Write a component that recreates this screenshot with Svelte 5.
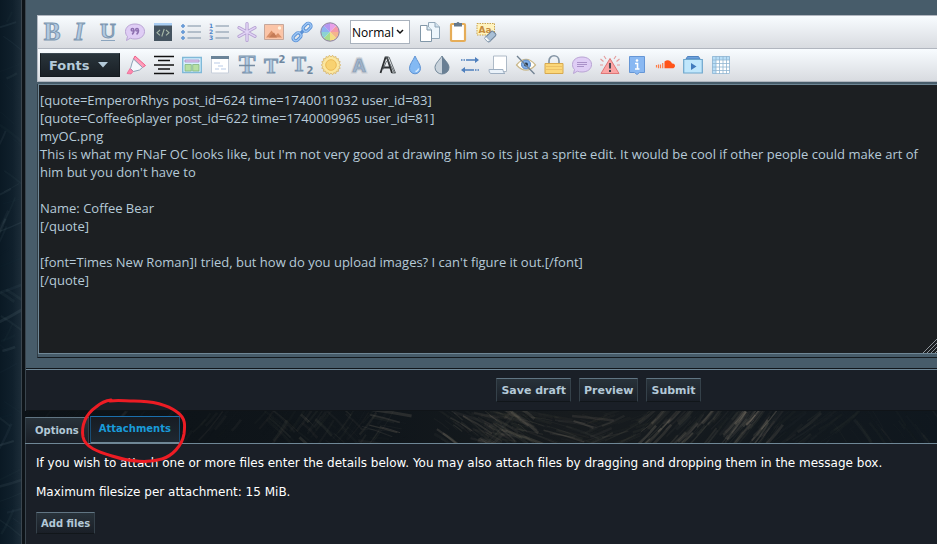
<script lang="ts">
	type Icon = { label: string; art: string };

	const letter = (char: string, extra = '', x = 10, size = 25) =>
		`<text x="${x}" y="18" text-anchor="middle" font-family="Liberation Serif, serif" font-weight="bold" font-size="${size}" fill="#b3cae1" stroke="#7c96b0" stroke-width="1" ${extra}>${char}</text>`;

	const small = (char: string, x: number, y: number, size: number, fill: string) =>
		`<text x="${x}" y="${y}" text-anchor="middle" font-family="DejaVu Sans, sans-serif" font-weight="bold" font-size="${size}" fill="${fill}">${char}</text>`;

	const wheel = ['#e8a0e8', '#f59aa8', '#f5b48c', '#f5dc82', '#a8dc8c', '#8cd2d2', '#8cb4f0', '#b496f0']
		.map((fill, i) => `<path d="M10 10V1A9 9 0 0 1 16.4 3.6Z" fill="${fill}" transform="rotate(${i * 45} 10 10)"/>`)
		.join('');

	const sunPoints = Array.from({ length: 36 }, (_, i) => {
		const r = i % 2 ? 8.2 : 9.8;
		const a = (i * Math.PI) / 18;
		return `${(10 + r * Math.cos(a)).toFixed(2)},${(10 + r * Math.sin(a)).toFixed(2)}`;
	}).join(' ');

	const basic: Icon[] = [
		{ label: 'Bold', art: letter('B') },
		{ label: 'Italic', art: letter('I', 'font-style="italic"', 9) },
		{ label: 'Underline', art: letter('U', 'dy="-2"', 10, 22) + '<path d="M3 18.500H17" stroke="#8ca5be"/>' },
		{
			label: 'Quote',
			art: '<path d="M10 2c5.500 0 9.500 3 9.500 7.500S15.500 17 10 17c-1.800 0-3.300-.2-4.700-.8L1.500 18.500l1-4C1.200 13.200.500 11.500.500 9.500.500 5 4.500 2 10 2Z" fill="#dfcdf5" stroke="#b9a4d4"/><g fill="none" stroke="#8d6fb0" stroke-width="1.500"><circle cx="7.500" cy="7.800" r="1.300"/><path d="M9 8c0 2-.5 3.500-2 4.200"/><circle cx="12" cy="7.800" r="1.300"/><path d="M13.500 8c0 2-.5 3.500-2 4.200"/></g>'
		},
		{
			label: 'Code',
			art: '<path d="M1 1H19V19H1Z" fill="#455460"/><path d="M1 1H19V3.500H1Z" fill="#a9cdf2"/><path d="M7 8 4 10.700 7 13.400M13 8l3 2.700-3 2.700M11.200 7 8.800 14.500" fill="none" stroke="#a7b8a8" stroke-width="1.100"/>'
		},
		{
			label: 'List',
			art: '<path d="M6.500 4H20M6.500 10H20M6.500 16H20" stroke="#7c8fa3" stroke-width="1.200"/><g fill="#8cbcf0" stroke="#4d85ca"><circle cx="2" cy="4" r="1.300"/><circle cx="2" cy="10" r="1.300"/><circle cx="2" cy="16" r="1.300"/></g>'
		},
		{
			label: 'Ordered list',
			art:
				'<path d="M6.500 4H20M6.500 10H20M6.500 16H20" stroke="#7c8fa3" stroke-width="1.200"/>' +
				small('1', 2, 6, 6, '#4d85ca') +
				small('2', 2, 12, 6, '#4d85ca') +
				small('3', 2, 18, 6, '#4d85ca')
		},
		{
			label: 'List item',
			art: '<path d="M10 1.500V18.500M2 5.700 18 14.300M18 5.700 2 14.300" stroke="#b5a0d2" stroke-width="3.200" stroke-linecap="round"/><path d="M10 1.500V18.500M2 5.700 18 14.300M18 5.700 2 14.300" stroke="#e2d5f6" stroke-width="1.500" stroke-linecap="round"/>'
		},
		{
			label: 'Image',
			art: '<path d="M.5 2.500H19.500V17.500H.5Z" fill="#fbc5a8" stroke="#c5a79b"/><circle cx="15.500" cy="6" r="1.700" fill="#fff2df"/><path d="m2 15.500 5.500-7 4 5 2.500-2.500 4 4.500Z" fill="#d98f68"/><path d="m8 12 2-1.500 3 5H5Z" fill="#c47b57"/>'
		},
		{
			label: 'Link',
			art: '<g fill="none" stroke="#5b92d6" stroke-width="3.200"><rect x="10.500" y="2.500" width="9" height="5.500" rx="2.700" transform="rotate(-45 15 5.200)"/><rect x=".5" y="12" width="9" height="5.500" rx="2.700" transform="rotate(-45 5 14.700)"/><path d="m7 13 6-6"/></g><g fill="none" stroke="#9dc6f5" stroke-width="1.300"><rect x="10.500" y="2.500" width="9" height="5.500" rx="2.700" transform="rotate(-45 15 5.200)"/><rect x=".5" y="12" width="9" height="5.500" rx="2.700" transform="rotate(-45 5 14.700)"/></g>'
		},
		{ label: 'Font colour', art: wheel + '<circle cx="10" cy="10" r="9.200" fill="none" stroke="#8a7c9c"/>' }
	];

	const clipboard: Icon[] = [
		{
			label: 'Copy',
			art: '<path d="M8.500.5H15L19.500 5V16.500H8.500Z" fill="#edf6fc" stroke="#91a7b8"/><path d="M15 .5V5H19.500" fill="#cfe1ee" stroke="#91a7b8"/><path d="M.5 3.500H7L11.500 8V19.500H.5Z" fill="#fff" stroke="#8197a8"/><path d="M7 3.500V8H11.500" fill="#d8e8f2" stroke="#8197a8"/>'
		},
		{
			label: 'Paste',
			art: '<rect x="3" y="2" width="14" height="17" rx="1" fill="#fff" stroke="#e6ad58" stroke-width="2.200"/><path d="M6 1h2.500c.5-1.300 2.500-1.300 3 0H14v3.500H6Z" fill="#64788c"/>'
		},
		{
			label: 'Remove formatting',
			art:
				'<path d="M1 1.500H18.500V13H1Z" fill="#fff3be" stroke="#c9a34e" stroke-dasharray="1.500 1"/>' +
				'<text x="9" y="11" text-anchor="middle" font-family="DejaVu Sans, sans-serif" font-size="9" font-weight="bold" fill="#c58c3e">Aa</text>' +
				'<rect x="9" y="11.500" width="11" height="6" rx="1.500" fill="#a8bfd6" stroke="#6d8299" transform="rotate(-45 14.500 14.500)"/><path d="m10 14.500 4.500 4.500-3 .5-3-3Z" fill="#f4f8fb" stroke="#8ca0b4" stroke-width=".7"/>'
		}
	];

	const custom: Icon[] = [
		{
			label: 'Highlight',
			art: '<path d="m9 1 10.500 9.500-3 2L7.500 4Z" fill="#ff9dba" stroke="#ee5d86"/><path d="m7.500 4 9 8.500-3 2.500-6 1.500-3-3L6 8Z" fill="#f4f8fc" stroke="#8da3b8"/><path d="m4 13.500 3 3-2 2.500-4-.5Z" fill="#ff86ac" stroke="#e86490" stroke-width=".7"/>'
		},
		{ label: 'Center', art: '<path d="M0 1.500H20M4 5.500H16M0 10H20M4 14H16M0 18.500H20" stroke="#111" stroke-width="1.600"/>' },
		{
			label: 'Table',
			art: '<path d="M.7 2.500H19.300V17.500H.7Z" fill="#d6f1ff" stroke="#80b9d8" stroke-width="1.400"/><path d="M3 5H17V7H3Z" fill="#e4cdf4" stroke="#aa8dc3" stroke-width=".8"/><path d="M3 9.500H9.300V16H3ZM10.700 9.500H17V16H10.700Z" fill="#b7dfa3" stroke="#83b57e" stroke-width=".8"/>'
		},
		{
			label: 'Window',
			art: '<path d="M1.500 2H18.500V18H1.500Z" fill="#fff" stroke="#c7cfdb"/><path d="M1 1H19V4H1Z" fill="#6a8398"/><path d="M4 8H10M8 11H13M5 14H9M11 14H16" stroke="#b9cbe8" stroke-width="1.200"/>'
		},
		{ label: 'Strikethrough', art: letter('T') + '<path d="M2 10.500H18" stroke="#768ca3" stroke-width="1.500"/>' },
		{ label: 'Superscript', art: letter('T', '', 6, 21) + small('2', 17, 8, 10, '#6f87a0') },
		{ label: 'Subscript', art: letter('T', 'dy="-2"', 6, 21) + small('2', 17, 19, 10, '#6f87a0') },
		{
			label: 'Glow',
			art: `<polygon points="${sunPoints}" fill="#fbe7a0" stroke="#d5b061" stroke-width=".8"/><circle cx="10" cy="10" r="5.300" fill="#f8d271" stroke="#edbb57"/>`
		},
		{
			label: 'Shadow',
			art: '<text x="10" y="17" text-anchor="middle" font-family="Liberation Sans, sans-serif" font-size="19" font-weight="bold" fill="#a9b8c8" stroke="#c9ced5" stroke-width="3" paint-order="stroke">A</text><text x="10" y="17" text-anchor="middle" font-family="Liberation Sans, sans-serif" font-size="19" font-weight="bold" fill="#9fb4cc" stroke="#8297ad" stroke-width=".6">A</text>'
		},
		{
			label: 'Drop shadow',
			art: '<path d="M3.500 18 8.500 2.500H10L15 18M5.500 12.500H13.500" fill="none" stroke="#2d3032" stroke-width="1.800"/><path d="M10 3 17.500 18M8.500 2.500 12 2l6.500 16H15M6 14.500 9.500 6" fill="none" stroke="#555b5f" stroke-width=".9"/>'
		},
		{
			label: 'Blur',
			art: '<path d="M10 1C12 6 15.500 9 15.500 13.300a5.500 5.500 0 0 1-11 0C4.500 9 8 6 10 1Z" fill="#83b9f3" stroke="#5f93d3"/><path d="M13.500 13.500a3.500 3.500 0 0 1-3 3" fill="none" stroke="#dceeff" stroke-width="1.300"/>'
		},
		{
			label: 'Contrast',
			art: '<path d="M10 1c2.500 4 7 7.500 7 11.500a7 6.500 0 0 1-14 0C3 8.500 7.500 5 10 1Z" fill="#c9d3dc" stroke="#74899a"/><path d="M10 1c2.500 4 7 7.500 7 11.500a7 6.500 0 0 1-7 6.500Z" fill="#697f94"/>'
		},
		{
			label: 'Marquee',
			art: '<g stroke="#4e7fbd" stroke-width="1.600"><path d="M6 5H17M4 15H14"/><path d="M1 5H5M15 15H19" stroke-dasharray="1.500 1"/></g><path d="m15 2 4 3-4 3ZM5 12l-4 3 4 3Z" fill="#4e7fbd"/>'
		},
		{
			label: 'Scroll',
			art: '<path d="M5.500 1H18.500V16.500H5.500Z" fill="#fff" stroke="#aebac7"/><path d="M1 14.500H15c0 2 1 3.500 2 4H3c-1.500 0-2-2-2-4Z" fill="#eaf2fa" stroke="#9eafc2"/>'
		},
		{
			label: 'Hidden',
			art: '<path d="M.5 10Q10-1.500 19.500 10 10 20.500.500 10Z" fill="#fffef8" stroke="#c9b78a" stroke-width="1.200"/><circle cx="10" cy="9.500" r="4.500" fill="#7eaeea" stroke="#5d86bd"/><circle cx="10" cy="9.500" r="2" fill="#25364a"/><path d="M1 1 18.500 19" stroke="#718292" stroke-width="1.300"/>'
		},
		{
			label: 'Private',
			art: '<path d="M5 9V6C5-1 15-1 15 6V9" fill="none" stroke="#8495a5" stroke-width="1.700"/><path d="M1 8.500H19V18.500H1Z" fill="#fbd779" stroke="#d7a94f"/><path d="M2 11.500H18M2 14.500H18" stroke="#ecc067"/>'
		},
		{
			label: 'Comment',
			art: '<path d="M10 2c5.500 0 9.500 3 9.500 7.500S15.500 17 10 17c-1.800 0-3.300-.2-4.700-.8L1.500 18.500l1-4C1.200 13.200.500 11.500.500 9.500.500 5 4.500 2 10 2Z" fill="#dfcdf5" stroke="#b9a4d4"/><path d="M5 7.500H15M5 9.500H15M5 11.500H12" stroke="#aa91c8"/>'
		},
		{
			label: 'Warning',
			art: '<path d="m10 3.500 9 15H1Z" fill="#fba5a5" stroke="#de7777"/><path d="M10 8V13.500M10 15V17" stroke="#42464f" stroke-width="1.900"/><path d="m6 4-2-3M3.500 6.500.500 4M3 10H0M14 4l2-3M16.500 6.500 19.500 4M17 10H20" stroke="#e59a9a" stroke-width="1.100"/>'
		},
		{
			label: 'Information',
			art: '<path d="M2.500 1.500H17.500V17.500H12.500L10 19.500 7.500 17.500H2.500Z" fill="#89b8f2" stroke="#6596d6"/><circle cx="10" cy="5.500" r="1.300" fill="#fff"/><path d="M8 8.500H10.500V14M8 14H12.500" fill="none" stroke="#fff" stroke-width="1.600"/>'
		},
		{
			label: 'SoundCloud',
			art: '<path d="M9.500 6.500c3-2.500 6.500-1 7.500 2 2-.3 3 1 3 2.200 0 1.500-1 2.600-2.800 2.600H9.500Z" fill="#ff5419"/><path d="M1.500 10V12.500M3.500 9.500V13.300M5.500 9.500V13.300M7.700 8V13.300" stroke="#ff7b46" stroke-width="1.200"/>'
		},
		{
			label: 'Video',
			art: '<path d="M3 4 4.500 1.500h11L17 4Z" fill="#6ca1dd" stroke="#4f83bf"/><path d="M.7 4.500H19.300V18H.7Z" fill="#c0e7fc" stroke="#6da6cc" stroke-width="1.200"/><path d="m8 8 5.500 3.500L8 15Z" fill="#417bbd"/>'
		},
		{
			label: 'Grid',
			art: '<path d="M1 1H19V19H1Z" fill="#fff"/><path d="M1 1H19V5H5V19H1Z" fill="#b8def7"/><path d="M1.500 1.500H18.500V18.500H1.500ZM5 1V19M8.500 1V19M12 1V19M15.500 1V19M1 5H19M1 8.500H19M1 12H19M1 15.500H19" fill="none" stroke="#91b5d1" stroke-width=".8"/>'
		}
	];

	// Scratches of the page background, fixed seed so they stay put between renders.
	// lean is the slope of the strokes, glow their strongest opacity
	function scratches(count: number, x0: number, w: number, h: number, lean: number, glow: number) {
		let s = Math.round(count * 7919 + x0 * 31 + w + 11);
		const rnd = () => (s = (s * 16807) % 2147483647) / 2147483647;
		rnd();
		return Array.from({ length: count }, () => {
			const x = x0 + rnd() * w;
			const y = rnd() * h;
			const dx = (14 + rnd() * 40) / (1 + Math.abs(lean));
			const dy = dx * (lean + (rnd() - 0.5) * 0.3);
			return {
				d: `M${(x - dx / 2).toFixed(1)} ${(y - dy / 2).toFixed(1)}q${(dx * 0.5).toFixed(1)} ${(dy * 0.4).toFixed(1)} ${dx.toFixed(1)} ${dy.toFixed(1)}`,
				o: glow * rnd() * rnd(),
				w: 0.6 + rnd() * 2.4
			};
		});
	}

	const sideMarks = [
		...scratches(30, 0, 20, 544, -0.4, 0.16),
		...scratches(24, 0, 20, 544, 0.8, 0.14),
		...scratches(10, 0, 10, 544, -2, 0.2)
	];

	const bandMarks = [
		...scratches(60, 0, 250, 34, -1.2, 0.1),
		...scratches(50, 240, 90, 34, 0.9, 0.18),
		...scratches(40, 240, 120, 34, -1.4, 0.16),
		...scratches(12, 352, 16, 34, 0.2, 0.3),
		...scratches(90, 415, 90, 34, 0.7, 0.28),
		...scratches(80, 450, 130, 34, 0.25, 0.26),
		...scratches(30, 455, 40, 34, -1.1, 0.2),
		...scratches(50, 560, 60, 34, -0.4, 0.15),
		...scratches(60, 615, 50, 34, -1, 0.32),
		...scratches(60, 665, 50, 34, -1.2, 0.22),
		...scratches(60, 710, 40, 34, -1.3, 0.36),
		...scratches(50, 750, 80, 34, -0.8, 0.12),
		...scratches(40, 810, 100, 34, 1.4, 0.12)
	];

	let size = $state('Normal');
	let message = $state(`[quote=EmperorRhys post_id=624 time=1740011032 user_id=83]
[quote=Coffee6player post_id=622 time=1740009965 user_id=81]
myOC.png
This is what my FNaF OC looks like, but I'm not very good at drawing him so its just a sprite edit. It would be cool if other people could make art of him but you don't have to

Name: Coffee Bear
[/quote]

[font=Times New Roman]I tried, but how do you upload images? I can't figure it out.[/font]
[/quote]`);
</script>

{#snippet tools(icons: Icon[])}
	{#each icons as icon (icon.label)}
		<button class="tool" type="button" aria-label={icon.label}>
			<svg viewBox="0 0 20 20" aria-hidden="true">{@html icon.art}</svg>
		</button>
	{/each}
{/snippet}

<div class="page">
	<div class="side">
		<svg viewBox="0 0 26 544" preserveAspectRatio="xMinYMin slice" aria-hidden="true">
			{#each sideMarks as mark}
				<path d={mark.d} stroke-opacity={mark.o} stroke-width={mark.w} />
			{/each}
		</svg>
	</div>

	<main>
		<section class="editor">
			<div class="toolbar">
				<div class="row">
					<div class="group basic">{@render tools(basic)}</div>
					<div class="size">
						<select aria-label="Font size" bind:value={size}>
							<option>Tiny</option>
							<option>Normal</option>
							<option>Large</option>
						</select>
						<svg viewBox="0 0 8 6" aria-hidden="true"><path d="m1 1 3 3 3-3" /></svg>
					</div>
					<div class="group">{@render tools(clipboard)}</div>
				</div>
				<div class="row">
					<button class="fonts" type="button">
						Fonts
						<svg viewBox="0 0 10 6" aria-hidden="true"><path d="M0 0H10L5 5.500Z" /></svg>
					</button>
					<div class="group custom">{@render tools(custom)}</div>
				</div>
			</div>
			<div class="message">
				<textarea aria-label="Message" spellcheck="false" bind:value={message}></textarea>
				<svg class="grip" viewBox="0 0 15 15" aria-hidden="true">
					<path d="M1 15 15 1M5 15 15 5M9 15l6-6M13 15l2-2" />
				</svg>
			</div>
		</section>

		<div class="actions">
			<button class="btn" type="button">Save draft</button>
			<button class="btn" type="button">Preview</button>
			<button class="btn" type="button">Submit</button>
		</div>

		<nav class="tabs">
			<svg class="texture" viewBox="0 0 912 34" preserveAspectRatio="xMinYMin slice" aria-hidden="true">
				{#each bandMarks as mark}
					<path d={mark.d} stroke-opacity={mark.o} stroke-width={mark.w} />
				{/each}
			</svg>
			<button class="tab" type="button">Options</button>
			<button class="tab active" type="button">Attachments</button>
			<svg class="mark" viewBox="0 0 110 70" aria-hidden="true">
				<path
					d="M31 5C39 4 46 5 55 5c20 0 35 5 43 11 9 6 8 14 7 22-2 12-12 22-22 25-13 4-32 3-50-3C19 56 6 51 4 41 2 29 7 18 17 11Q24 5 32 4"
				/>
			</svg>
		</nav>

		<section class="attach">
			<p>
				If you wish to attach one or more files enter the details below. You may also attach files by
				dragging and dropping them in the message box.
			</p>
			<p>Maximum filesize per attachment: 15 MiB.</p>
			<button class="btn add" type="button">Add files</button>
		</section>
	</main>
</div>

<style>
	:global(body) {
		margin: 0;
		background: #1a1f27;
	}

	button,
	select,
	textarea {
		box-sizing: border-box;
		margin: 0;
		font-family: 'DejaVu Sans', Verdana, sans-serif;
	}

	.page {
		display: flex;
		min-height: 100vh;
		overflow: hidden;
		font-family: 'DejaVu Sans', Verdana, sans-serif;
	}

	.side {
		flex: none;
		box-sizing: border-box;
		position: relative;
		width: 22px;
		margin-right: 3px;
		border-right: 1px solid #3a454e;
		background: linear-gradient(90deg, #0a1924, #10202c 60%, #1c2c38);
		box-shadow: 3px 0 0 #0d1318;
	}

	.side svg,
	.texture {
		position: absolute;
		inset: 0;
		width: 100%;
		height: 100%;
		fill: none;
		stroke: #7f959f;
	}

	main {
		flex: 1;
		display: flex;
		flex-direction: column;
		min-width: 0;
		border-left: 1px solid #3a454e;
	}

	.editor {
		padding: 15px 0 10px 11px;
		background: #475c6a;
		border-bottom: 1px solid #10161b;
	}

	.toolbar {
		border-left: 1px solid #b4bac4;
		border-bottom: 1px solid #b1b6bf;
	}

	.row {
		display: flex;
		align-items: center;
		box-sizing: border-box;
		height: 33px;
		border-top: 1px solid #b1b6bf;
		background: linear-gradient(#f8fcff, #d8dbe0);
	}

	.group {
		display: flex;
	}

	.basic,
	.custom {
		display: grid;
		grid-auto-flow: column;
		grid-auto-columns: 1fr;
		width: 306px;
	}

	.custom {
		width: 613px;
	}

	.tool {
		display: flex;
		justify-content: center;
		align-items: center;
		min-width: 0;
		height: 28px;
		padding: 0 4px;
		border: 0;
		background: none;
	}

	.tool svg {
		flex: none;
		width: 20px;
		height: 20px;
		overflow: visible;
	}

	.size {
		position: relative;
		margin: 0 6px;
	}

	.size select {
		display: block;
		width: 60px;
		height: 24px;
		padding: 0 0 0 1px;
		border: 1px solid #a9b2bd;
		border-radius: 0;
		appearance: none;
		background: #fff;
		color: #000;
		font-family: 'Open Sans', sans-serif;
		font-size: 12px;
	}

	.size svg {
		position: absolute;
		top: 9px;
		right: 6px;
		width: 8px;
		height: 6px;
		fill: none;
		stroke: #111;
		stroke-width: 1.5;
		pointer-events: none;
	}

	.fonts {
		display: flex;
		align-items: center;
		gap: 8px;
		width: 80px;
		height: 24px;
		margin: 0 2px;
		padding: 0 8px;
		border: 1px solid #141a1f;
		border-top-color: #3c4952;
		background: linear-gradient(#29343b, #1a2026);
		color: #b4cad9;
		font-size: 13px;
		font-weight: bold;
	}

	.fonts svg {
		width: 10px;
		height: 6px;
		fill: #b4cad9;
	}

	.message {
		position: relative;
		margin-top: 2px;
		border-bottom: 1px solid #141a1f;
		border-left: 1px solid #303d46;
	}

	.message textarea {
		display: block;
		width: 100%;
		height: 270px;
		margin-bottom: 3px;
		padding: 6px 0 0 1px;
		border: 1px solid #6f8796;
		border-width: 1px 0 1px 1px;
		outline: 0;
		resize: none;
		background: #1c1f22;
		color: #b6cad8;
		font-family: 'Open Sans', 'Trebuchet MS', sans-serif;
		font-size: 13px;
		line-height: 18px;
	}

	.grip {
		position: absolute;
		right: 0;
		bottom: 4px;
		width: 15px;
		height: 15px;
		fill: none;
		stroke: #8d949a;
	}

	.actions {
		display: flex;
		justify-content: center;
		gap: 8px;
		padding: 8px 0 8px 234px;
		border-top: 1px solid #6f8796;
		border-bottom: 1px solid #101418;
		background: #1a1f27;
	}

	.btn {
		height: 24px;
		padding: 0 4px;
		border: 1px solid #35414a;
		border-top-color: #617583;
		border-bottom-color: #11161a;
		background: linear-gradient(#28323a, #1a1f27);
		color: #b3c8d7;
		font-size: 11px;
		font-weight: bold;
	}

	.add {
		height: 22px;
		font-size: 10px;
	}

	.tabs {
		position: relative;
		display: flex;
		align-items: flex-end;
		gap: 1px;
		box-sizing: border-box;
		height: 33px;
		margin-left: -1px;
		border-bottom: 1px solid #6f8796;
		background: linear-gradient(90deg, #0c1217, #10161b 40%, #171b1e 60%, #0f171e);
	}

	.texture {
		overflow: hidden;
		stroke: #8a8072;
	}

	.tab {
		position: relative;
		height: 26px;
		padding: 0 9px;
		border: 1px solid #35414a;
		border-top-color: #617583;
		border-bottom: 0;
		background: linear-gradient(#28323a, #1a1f27);
		color: #b3c8d7;
		font-size: 10px;
		font-weight: bold;
	}

	.active {
		height: 28px;
		margin-bottom: -1px;
		padding: 0 8px 2px;
		border-color: #194d75;
		border-top-color: #1b6fac;
		border-bottom: 2px solid #6f8796;
		background: linear-gradient(#171c23, #1e2831);
		color: #199bd9;
	}

	.mark {
		position: absolute;
		top: -15px;
		left: 54px;
		width: 110px;
		height: 70px;
		fill: none;
		stroke: #ed1c24;
		stroke-width: 3;
		stroke-linecap: round;
		pointer-events: none;
	}

	.attach {
		flex: 1;
		padding: 10px 10px 9px;
		background: #1a1f27;
		color: #fff;
		font-size: 12px;
		line-height: 18px;
	}

	.attach p {
		margin: 0 0 11px;
	}
</style>
